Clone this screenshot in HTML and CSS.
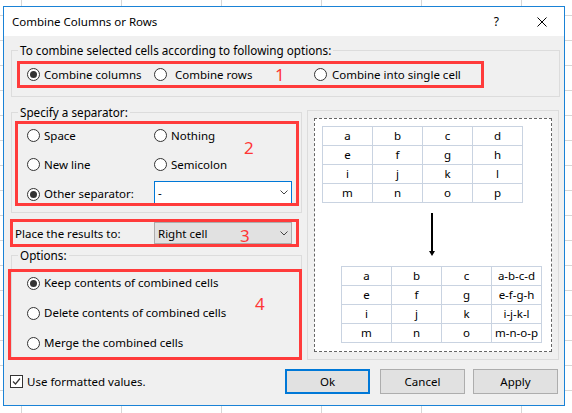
FILE: index.html
```html
<!DOCTYPE html>
<html lang="en">
<head>
  <meta charset="UTF-8" />
  <title>Combine Columns or Rows</title>
  <link rel="stylesheet" href="styles.css">
</head>
<body>
  <div class="dialog">
    <div class="titlebar">
      <span class="title">Combine Columns or Rows</span>
      <span class="help">?</span>
      <svg class="close" viewBox="0 0 10 10"><path d="M0.5 0.5 L9.5 9.5 M9.5 0.5 L0.5 9.5" /></svg>
    </div>

    <div class="content">
      <!-- Combine mode -->
      <fieldset class="group">
        <legend>To combine selected cells according to following options:</legend>
        <div class="mark-box box-combine">
          <label class="radio-item w-cols"><span class="radio checked"></span>Combine columns</label>
          <label class="radio-item w-rows"><span class="radio"></span>Combine rows</label>
          <label class="radio-item w-single"><span class="radio"></span>Combine into single cell</label>
          <span class="mark mark-1">1</span>
        </div>
      </fieldset>

      <div class="main">
        <div class="left">
          <!-- Separator -->
          <fieldset class="group">
            <legend>Specify a separator:</legend>
            <div class="mark-box box-sep">
              <div class="sep-row">
                <label class="radio-item col-1"><span class="radio"></span>Space</label>
                <label class="radio-item"><span class="radio"></span>Nothing</label>
              </div>
              <div class="sep-row row-2">
                <label class="radio-item col-1"><span class="radio"></span>New line</label>
                <label class="radio-item"><span class="radio"></span>Semicolon</label>
              </div>
              <div class="sep-row row-3">
                <label class="radio-item col-1 shift"><span class="radio checked"></span>Other separator:</label>
                <div class="select">
                  <span>-</span>
                  <svg class="chevron" viewBox="0 0 8 5"><polyline points="0.5,0.5 4,4 7.5,0.5" /></svg>
                </div>
              </div>
              <span class="mark mark-2">2</span>
            </div>
          </fieldset>

          <!-- Target -->
          <div class="mark-box box-place">
            <span class="place-label">Place the results to:</span>
            <div class="select combo">
              <span>Right cell</span>
              <svg class="chevron" viewBox="0 0 8 5"><polyline points="0.5,0.5 4,4 7.5,0.5" /></svg>
            </div>
            <span class="mark mark-3">3</span>
          </div>

          <!-- Options -->
          <fieldset class="group">
            <legend>Options:</legend>
            <div class="mark-box box-options">
              <label class="radio-item opt-row"><span class="radio checked"></span>Keep contents of combined cells</label>
              <label class="radio-item opt-row"><span class="radio"></span>Delete contents of combined cells</label>
              <label class="radio-item opt-row"><span class="radio"></span>Merge the combined cells</label>
              <span class="mark mark-4">4</span>
            </div>
          </fieldset>
        </div>

        <!-- Preview -->
        <div class="preview">
          <div class="preview-inner">
            <div class="cells">
              <span>a</span><span>b</span><span>c</span><span>d</span>
              <span>e</span><span>f</span><span>g</span><span>h</span>
              <span>i</span><span>j</span><span>k</span><span>l</span>
              <span>m</span><span>n</span><span>o</span><span>p</span>
            </div>
            <svg class="arrow" viewBox="0 0 8 43"><line x1="4" y1="0" x2="4" y2="40" /><polygon points="1,38 7,38 4,43" /></svg>
            <div class="cells cells-after">
              <span>a</span><span>b</span><span>c</span><span>a-b-c-d</span>
              <span>e</span><span>f</span><span>g</span><span>e-f-g-h</span>
              <span>i</span><span>j</span><span>k</span><span>i-j-k-l</span>
              <span>m</span><span>n</span><span>o</span><span>m-n-o-p</span>
            </div>
          </div>
        </div>
      </div>

      <div class="footer">
        <label class="check-item">
          <span class="checkbox"><svg viewBox="0 0 11 11"><polyline points="2,5.5 4.5,8 9,2.5" /></svg></span>
          Use formatted values.
        </label>
        <div class="buttons">
          <button class="btn btn-default">Ok</button>
          <button class="btn btn-cancel">Cancel</button>
          <button class="btn btn-apply">Apply</button>
        </div>
      </div>
    </div>
  </div>
</body>
</html>
```

FILE: styles.css
```css
* {
  box-sizing: border-box;
}
html, body {
  height: 100%;
}
body {
  margin: 0;
  font-family: "Noto Sans", "Open Sans", sans-serif;
  font-size: 11.5px;
  color: #000;
  background-color: #fff;
  background-image:
    linear-gradient(to right, #d6d6d6 1px, transparent 1px),
    linear-gradient(to bottom, #d6d6d6 1px, transparent 1px);
  background-size: 100px 100%, 100% 25px;
  background-position: 21px 0, 0 15px;
  overflow: hidden;
}
.dialog {
  width: 562px;
  height: 400px;
  margin: 6px 0 0 3px;
  border: 1px solid #1a82d6;
  background: #f0f0f0;
}
.titlebar {
  height: 29px;
  background: #fff;
  display: flex;
  align-items: center;
  padding-left: 8px;
  line-height: 16px;
}
.help {
  margin-left: auto;
  margin-right: 38px;
  font-size: 12px;
}
.close {
  width: 10px;
  height: 10px;
  margin-right: 17px;
}
.close path {
  stroke: #000;
  stroke-width: 1;
  fill: none;
}
.content {
  padding: 6px 4px 0 7px;
}

/* group boxes */
.group {
  margin: 0;
  padding: 0;
  min-width: 0;
  border: 1px solid #dcdcdc;
}
.group legend {
  margin-left: 6px;
  padding: 0 2px;
  line-height: 16px;
  font-size: 11.7px;
}

/* red annotation frames */
.mark-box {
  position: relative;
  border: 3px solid #ff3b3b;
}
.mark {
  position: absolute;
  font-size: 17px;
  line-height: 17px;
  color: #ff3636;
}
.mark-1 { left: 255px; top: 2px; }
.mark-2 { left: 226px; top: 15px; }
.mark-3 { left: 227px; top: 5px; }
.mark-4 { left: 244px; top: 23px; }

/* radios */
.radio-item {
  display: flex;
  align-items: center;
  line-height: 16px;
  white-space: nowrap;
}
.radio {
  position: relative;
  width: 13px;
  height: 13px;
  margin-right: 4px;
  border: 1px solid #333;
  border-radius: 50%;
  background: #fff;
  flex-shrink: 0;
}
.radio.checked::after {
  content: "";
  position: absolute;
  left: 2px;
  top: 2px;
  width: 7px;
  height: 7px;
  border-radius: 50%;
  background: #333;
}

.box-combine {
  display: flex;
  align-items: center;
  width: 467px;
  height: 27px;
  margin: 3px 0 8px 5px;
  padding-left: 7px;
}
.w-cols { width: 127px; }
.w-rows { width: 160px; }
.w-rows .radio { margin-right: 8px; }
.w-single .radio { margin-right: 5px; }

.main {
  display: grid;
  grid-template-columns: 291px 252px;
  column-gap: 5px;
  align-items: start;
  margin-top: 7px;
}

/* separator */
.box-sep {
  height: 85px;
  margin: 1px 2px 6px 3px;
  padding-left: 9px;
}
.sep-row {
  display: flex;
  align-items: center;
  height: 23px;
}
.sep-row.row-2 {
  margin-top: 6px;
}
.sep-row.row-3 {
  height: 22px;
  margin-top: 5px;
}
.col-1 {
  width: 127px;
}
.shift {
  margin-top: 4px;
}
.select {
  display: flex;
  align-items: center;
  justify-content: space-between;
  width: 138px;
  height: 22px;
  padding: 0 3px 0 3px;
  border: 1px solid #0078d7;
  border-bottom: 0;
  background: #fff;
}
.chevron {
  width: 8px;
  height: 5px;
}
.chevron polyline {
  fill: none;
  stroke: #444;
  stroke-width: 1;
}

/* place results */
.box-place {
  display: flex;
  align-items: center;
  height: 28px;
  margin: 6px 3px 0 -1px;
  padding-left: 2px;
}
.place-label {
  width: 139px;
}
.select.combo {
  border: 1px solid #adadad;
  background: #e1e1e1;
}

/* options */
.box-options {
  width: 294px;
  height: 91px;
  margin: 6px 0 -2px -4px;
  padding-left: 16px;
}
.opt-row {
  height: 22px;
}
.opt-row + .opt-row {
  margin-top: 8px;
}

/* preview */
.preview {
  height: 250px;
  margin-top: 6px;
  padding: 7px 6px;
  border: 1px solid #dcdcdc;
}
.preview-inner {
  display: flex;
  flex-direction: column;
  height: 234px;
  padding: 7px 9px 0 7px;
  border: 1px dashed #666;
  background: #fff;
}
.cells {
  display: grid;
  grid-template-columns: repeat(4, 49px);
  grid-auto-rows: 18px;
  gap: 1px;
  width: 201px;
  border: 1px solid #c9d3e1;
  background: #c9d3e1;
}
.cells span {
  background: #fff;
  text-align: center;
  line-height: 18px;
}
.cells-after {
  align-self: flex-end;
  margin-top: 10px;
}
.arrow {
  align-self: center;
  width: 8px;
  height: 43px;
  margin-top: 10px;
}
.arrow line {
  stroke: #000;
  stroke-width: 2;
}
.arrow polygon {
  fill: #000;
}

/* footer */
.footer {
  display: flex;
  align-items: center;
  height: 25px;
  margin-top: 9px;
}
.check-item {
  display: flex;
  align-items: center;
  margin-left: -1px;
  line-height: 16px;
}
.checkbox {
  width: 13px;
  height: 13px;
  margin-right: 4px;
  border: 1px solid #333;
  background: #fff;
}
.checkbox svg {
  display: block;
  width: 11px;
  height: 11px;
}
.checkbox polyline {
  fill: none;
  stroke: #333;
  stroke-width: 1.2;
}
.buttons {
  display: flex;
  margin-left: auto;
  margin-right: 2px;
}
.btn {
  width: 85px;
  height: 25px;
  padding: 0;
  font: inherit;
  color: #000;
  background: #e1e1e1;
  border: 1px solid #adadad;
}
.btn-default {
  border: 2px solid #0078d7;
}
.btn-cancel {
  margin-left: 10px;
}
.btn-apply {
  margin-left: 8px;
}
```
